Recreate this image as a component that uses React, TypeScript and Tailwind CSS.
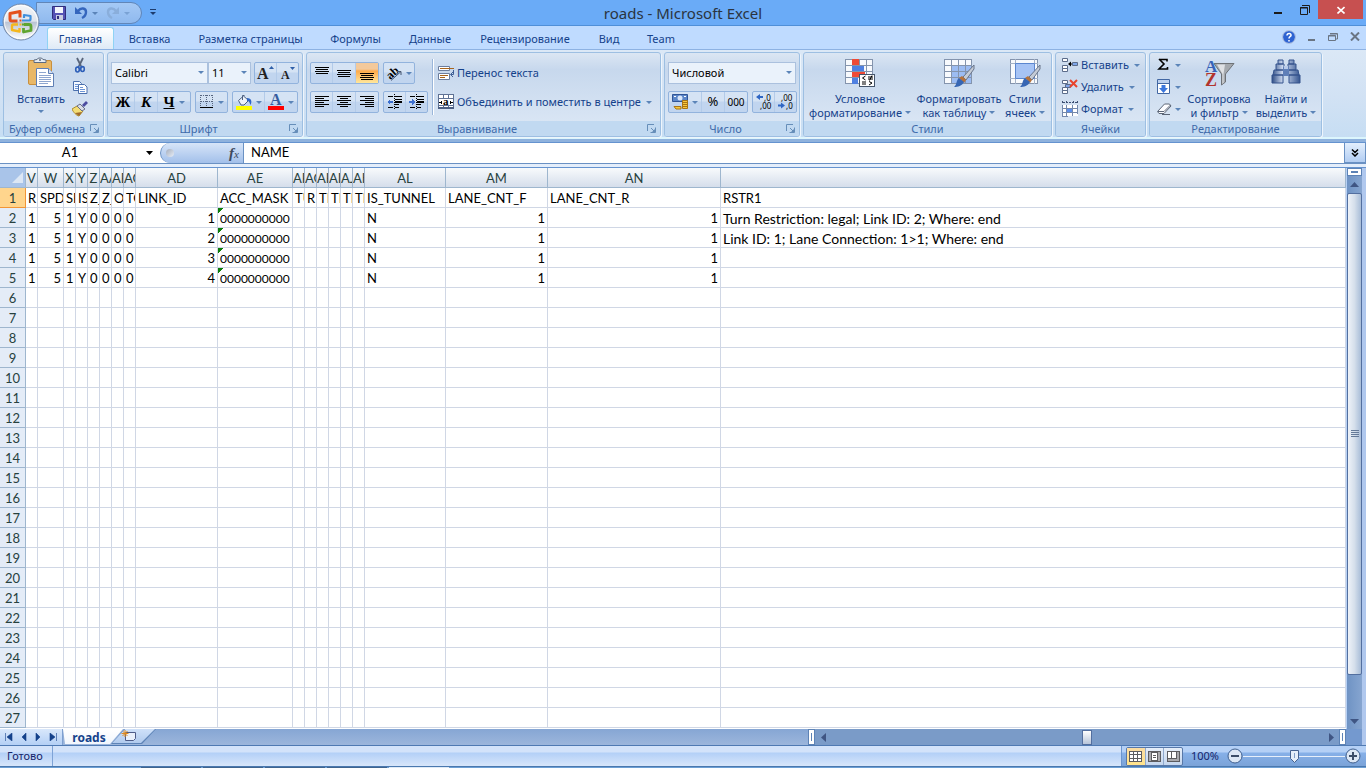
import { useState } from "react";
import type { ReactNode } from "react";
import clsx from "clsx";

const tabs = [
  { name: "Главная", width: "w-[67px]" },
  { name: "Вставка", width: "w-[71px]" },
  { name: "Разметка страницы", width: "w-[131px]" },
  { name: "Формулы", width: "w-[79px]" },
  { name: "Данные", width: "w-[70px]" },
  { name: "Рецензирование", width: "w-[120px]" },
  { name: "Вид", width: "w-[48px]" },
  { name: "Team", width: "w-[56px]" },
];

type Column = { id: string; title: string; width: string; right?: boolean; flag?: boolean };

const columns: Column[] = [
  { id: "V", title: "R", width: "w-[12px]", right: true },
  { id: "W", title: "SPD", width: "w-[26px]", right: true },
  { id: "X", title: "SPE", width: "w-[12px]", right: true },
  { id: "Y", title: "IS_", width: "w-[12px]" },
  { id: "Z", title: "Z_", width: "w-[12px]", right: true },
  { id: "AA", title: "Z_", width: "w-[12px]", right: true },
  { id: "AB", title: "O", width: "w-[12px]", right: true },
  { id: "AC", title: "TO", width: "w-[12px]", right: true },
  { id: "AD", title: "LINK_ID", width: "w-[82px]", right: true },
  { id: "AE", title: "ACC_MASK", width: "w-[75px]", flag: true },
  { id: "AF", title: "TU", width: "w-[12px]" },
  { id: "AG", title: "R", width: "w-[12px]" },
  { id: "AH", title: "TI", width: "w-[12px]" },
  { id: "AI", title: "TI", width: "w-[12px]" },
  { id: "AJ", title: "TI", width: "w-[12px]" },
  { id: "AK", title: "TI", width: "w-[12px]" },
  { id: "AL", title: "IS_TUNNEL", width: "w-[81px]" },
  { id: "AM", title: "LANE_CNT_F", width: "w-[102px]", right: true },
  { id: "AN", title: "LANE_CNT_R", width: "w-[173px]", right: true },
  { id: "", title: "RSTR1", width: "w-auto" },
];

const makeRow = (id: string, restriction: string) => [
  "1", "5", "1", "Y", "0", "0", "0", "0", id, "0000000000",
  "", "", "", "", "", "", "N", "1", "1", restriction,
];

const data = [
  makeRow("1", "Turn Restriction: legal; Link ID: 2; Where: end"),
  makeRow("2", "Link ID: 1; Lane Connection: 1>1; Where: end"),
  makeRow("3", ""),
  makeRow("4", ""),
];

function Arrow({ className }: { className?: string }) {
  return (
    <svg className={clsx("h-[3px] w-[6px] shrink-0", className)} viewBox="0 0 6 3">
      <path d="M0 0h6L3 3z" fill="#5b84b8" />
    </svg>
  );
}

function Group({ title, width, launcher, children }: { title: string; width: string; launcher?: boolean; children: ReactNode }) {
  return (
    <section
      aria-label={title}
      className={clsx(
        "flex h-[85px] shrink-0 flex-col overflow-hidden rounded-[3px] border border-[#9dbfe2] bg-linear-to-b from-[#dbe6f3] from-0% via-[#c7d8ed] via-20% to-[#dee9f6] shadow-[1px_1px_0_#eef5fc]",
        width
      )}
    >
      <div className="flex min-h-0 flex-1">{children}</div>
      <div className="flex h-[15px] items-center bg-[#c1d9f1] text-[#3e6aaa]">
        <span className="flex-1 text-center leading-[15px]">{title}</span>
        {launcher && (
          <button aria-label={title + ": параметры"} className="mr-1 h-[9px] w-[9px]">
            <svg viewBox="0 0 9 9" fill="none" stroke="#668eb9">
              <path d="M.5 7V.5H7M4 4l3 3M8.500 3.500v5h-5" />
              <path d="M8 5v3H5z" fill="#668eb9" stroke="none" />
            </svg>
          </button>
        )}
      </div>
    </section>
  );
}

function Cluster({ children }: { children: ReactNode }) {
  return (
    <div className="flex h-[22px] divide-x divide-[#b3cbe9] rounded-[2px] border border-[#92b3dd] bg-linear-to-b from-[#d5e3f4] from-45% to-[#c1d5ef] to-50%">
      {children}
    </div>
  );
}

function Tool({ label, width, active, drop, children }: { label: string; width: string; active?: boolean; drop?: boolean; children: ReactNode }) {
  return (
    <button
      aria-label={label}
      className={clsx(
        "flex h-5 items-center justify-center gap-1",
        width,
        active && "bg-linear-to-b from-[#f3c99b] from-30% via-[#fcab4a] via-40% to-[#ffe79b]"
      )}
    >
      {children}
      {drop && <Arrow />}
    </button>
  );
}

function Combo({ label, value, width }: { label: string; value: string; width: string }) {
  return (
    <div className={clsx("relative h-[22px]", width)}>
      <select
        aria-label={label}
        className="h-full w-full appearance-none border border-[#abc1de] bg-[#eaf2fb] pl-[3px] text-[11px] text-black outline-none"
      >
        <option>{value}</option>
      </select>
      <Arrow className="pointer-events-none absolute top-[9px] right-1" />
    </div>
  );
}

function Lines({ rows }: { rows: [number, number, number][] }) {
  return (
    <svg className="h-4 w-4" viewBox="0 0 16 16" shapeRendering="crispEdges">
      {rows.map(([x, y, w]) => (
        <rect key={y} x={x} y={y} width={w} height="1" fill="#000" />
      ))}
    </svg>
  );
}

function Indent({ right }: { right?: boolean }) {
  return (
    <svg className="h-4 w-4" viewBox="0 0 16 16" shapeRendering="crispEdges">
      <path d="M1 2h5M8 2h7M1 13h5M8 13h4M8 5h7M8 10h4" stroke="#000" transform="translate(0 .5)" />
      <path d="M8 7h7v2H8z" />
      <path d="M7.500 0v16" stroke="#000" strokeDasharray="1 1" />
      <path d={right ? "M6 8L3 5v2H0v2h3v2z" : "M0 8l3-3v2h3v2H3v2z"} fill="#3c6fd0" />
    </svg>
  );
}

function BigButton({ lines, width, drop = true, children }: { lines: string[]; width: string; drop?: boolean; children: ReactNode }) {
  return (
    <button className={clsx("flex flex-col items-center pt-[5px]", width)}>
      {children}
      <span className="mt-1 leading-[14px] whitespace-nowrap">{lines[0]}</span>
      <span className="flex h-[13px] items-center gap-[3px] leading-[13px] whitespace-nowrap">
        {lines[1]}
        {drop && <Arrow />}
      </span>
    </button>
  );
}

function RowButton({ text, children }: { text: string; children: ReactNode }) {
  return (
    <button className="flex h-[22px] items-center gap-[3px]">
      {children}
      <span>{text}</span>
      <Arrow className="ml-[2px]" />
    </button>
  );
}

function OfficeLogo() {
  return (
    <svg className="h-[38px] w-[38px]" viewBox="0 0 38 38">
      <defs>
        <linearGradient id="orb" x1="0" y1="0" x2="0" y2="1">
          <stop offset="0" stopColor="#f4f6f9" />
          <stop offset=".48" stopColor="#dfe4ec" />
          <stop offset=".5" stopColor="#b9c3d3" />
          <stop offset="1" stopColor="#fff" />
        </linearGradient>
      </defs>
      <circle cx="19" cy="19" r="18" fill="url(#orb)" stroke="#6f86a8" />
      <circle cx="19" cy="19" r="16.500" fill="none" stroke="#fff" opacity=".8" />
      <g fill="none" strokeLinejoin="round">
        <path d="M15.500 18H10a2 2 0 01-2-2v-5.500L18 8.500v6" stroke="#e4501c" strokeWidth="3" />
        <path d="M22 17.500h5a1.500 1.500 0 001.500-1.500v-3L22 12v3" stroke="#3f8fdc" strokeWidth="2.200" />
        <path d="M16 21.500h-4.500A1.500 1.500 0 0010 23v4l7.500 1.500V25" stroke="#f5b71c" strokeWidth="2.400" />
        <path d="M22 21.500h5a2 2 0 012 2v4L21.500 29v-4" stroke="#5fa531" strokeWidth="2.800" />
      </g>
      <path d="M17.500 16.500h2v2h-2z" fill="#e4501c" />
      <path d="M20 16.500h2v2h-2z" fill="#3f8fdc" />
      <path d="M17.500 20.500h2v2h-2z" fill="#f5b71c" />
      <path d="M20 20.500h2v2h-2z" fill="#5fa531" />
    </svg>
  );
}

function PasteIcon() {
  return (
    <svg className="h-[30px] w-[28px]" viewBox="0 0 28 30">
      <rect x="1.500" y="3.500" width="23" height="24" rx="1.500" fill="#e9b867" stroke="#c98f3c" />
      <path d="M7 5.500h12V3l-3-.500C15.500.5 10.500.5 10 2.500L7 3z" fill="#e8edf3" stroke="#5c6b80" />
      <circle cx="13" cy="3" r="1" fill="#5c6b80" />
      <path d="M9.500 11.500h12l5 5v13h-17z" fill="#fff" stroke="#5f7fb4" />
      <path d="M21.500 11.500v5h5" fill="#d5e0f2" stroke="#5f7fb4" />
      <path d="M12 15.500h7M12 18.500h12M12 20.500h12M12 22.500h12M12 24.500h12M12 26.500h9" stroke="#8ea6cf" />
    </svg>
  );
}

function CutIcon() {
  return (
    <svg className="h-4 w-4" viewBox="0 0 16 16" fill="none">
      <path d="M5 1l4 8M11 1L7 9" stroke="#59657a" strokeWidth="1.800" />
      <ellipse cx="5.500" cy="12.500" rx="1.800" ry="2.500" stroke="#2e5fb8" strokeWidth="1.600" />
      <ellipse cx="10.500" cy="12" rx="1.800" ry="2.500" stroke="#2e5fb8" strokeWidth="1.600" />
      <path d="M7 9l-1 2M9 9l1 2" stroke="#2e5fb8" strokeWidth="1.800" />
    </svg>
  );
}

function CopyIcon() {
  return (
    <svg className="h-4 w-4" viewBox="0 0 16 16" stroke="#4a6fad">
      <path d="M1.500 2.500h6l2 2v7h-8z" fill="#f5f9ff" />
      <path d="M6.500 5.500h6l2.500 2.500v6.500H6.500z" fill="#fff" />
      <path d="M3 5.500h3M3 7.500h3M3 9.500h3M8 8.500h3M8 10.500h5M8 12.500h5" stroke="#6d95d6" />
    </svg>
  );
}

function BrushIcon() {
  return (
    <svg className="h-4 w-4" viewBox="0 0 16 16">
      <path d="M0 8l5-3 6 5-4 5c-2 0-6-4-7-7z" fill="#f3dd75" stroke="#ab8a2e" />
      <path d="M3 12l4 3 3-4z" fill="#a06a2c" />
      <path d="M5 5l3-2 5 5-3 2z" fill="#d8dde6" stroke="#6a6f86" />
      <path d="M10 4l4-4 2 2-4 4z" fill="#4c4ca0" />
    </svg>
  );
}

// Table thumbnail shared by the three large style buttons
function StyleIcon({ kind }: { kind: "conditional" | "table" | "cells" }) {
  return (
    <svg className="h-[30px] w-[32px]" viewBox="0 0 32 30">
      <rect x="1.500" y="1.500" width="27" height="24" fill="#f8fafd" stroke="#8494ad" />
      {kind === "table" && <path d="M9 7h19v18H9z" fill="#9cbcf2" />}
      {kind !== "cells" && <path d="M8.500 1v25M15.500 1v25M22.500 1v25M1 7.500h28M1 13.500h28M1 19.500h28" stroke="#8494ad" />}
      {kind === "cells" && (
        <>
          <path d="M6.500 1v25M25.500 1v25M1 5.500h28M1 20.500h28" stroke="#a5b2c6" />
          <path d="M6.500 5.500h19v15h-19z" fill="#a6c3f5" stroke="#5b86cf" />
        </>
      )}
      {kind === "conditional" ? (
        <>
          <path d="M8 1h7v6H8zM8 14h13v5H8z" fill="#ef4a36" />
          <path d="M8 8h12v5H8zM8 20h6v6H8z" fill="#4f80e1" />
          <rect x="15.500" y="16.500" width="15" height="12" fill="#fff" stroke="#44546a" />
          <path d="M21.500 18l-3 2 3 2M18 24h4M18 26h4M24 19h5M24 21h5M28 17.500l-2.500 5M25 23.500l3 1.500-3 2" fill="none" stroke="#000" />
        </>
      ) : (
        <>
          <path d="M31 7L20 19l3 3 8-11z" fill="#c4cbd6" stroke="#68748a" />
          <path d="M19 18l4 4-2 3-5-5z" fill="#b5723c" />
          <path d="M16 20l5 4c-2 4-6 5-10 5 3-2 2-7 5-9z" fill="#3766b4" />
        </>
      )}
    </svg>
  );
}

function SortIcon() {
  return (
    <svg className="h-[30px] w-[32px] overflow-visible" viewBox="0 0 32 30">
      <path d="M11 5.500h20L22.500 16v8l-4 3V16z" fill="#a5a9ae" stroke="#6e7277" />
      <path d="M14 6.500h8L20.500 16v9l-1 1V16z" fill="#dfe1e4" />
      <text x="2" y="14" fontFamily="Liberation Serif, serif" fontWeight="700" fontSize="17" fill="#3763b8">A</text>
      <text x="2" y="28" fontFamily="Liberation Serif, serif" fontWeight="700" fontSize="18" fill="#b2342d">Z</text>
    </svg>
  );
}

function BinocularsIcon() {
  return (
    <svg className="h-[30px] w-[30px]" viewBox="0 0 30 30">
      <defs>
        <linearGradient id="barrel">
          <stop offset="0" stopColor="#2f4d85" />
          <stop offset=".4" stopColor="#d5e1f6" />
          <stop offset="1" stopColor="#34548f" />
        </linearGradient>
      </defs>
      <g fill="url(#barrel)" stroke="#35538c">
        <path d="M7 2h5v4H7zM18 2h5v4h-5zM5 6h8v6H5zM17 6h8v6h-8zM3 12h10v5H2zM17 12h10l1 5H17zM1 17h11v8H1zM18 17h11v8H18z" />
      </g>
      <path d="M12 9h6v9h-6z" fill="#5f7fb8" />
      <path d="M13 8h4v3h-4z" fill="#b9cbea" />
    </svg>
  );
}

function CellsIcon({ kind }: { kind: "insert" | "delete" | "format" }) {
  if (kind === "format") {
    return (
      <svg className="h-4 w-4" viewBox="0 0 16 16" shapeRendering="crispEdges">
        <path d="M1 1.500h14M.5 0v3M15.500 0v3M4.500 0v2M11.500 0v2" stroke="#3c4f72" strokeDasharray="2 1" />
        <path d="M1 4h15v11H1z" fill="#fff" />
        <path d="M5 7h6v4H5z" fill="#5d90ec" />
        <path d="M.5 4v11.500h5M4.500 4v11M10.500 4v11M0 7.500h16M0 11.500h16M15.500 4v9" stroke="#7388ac" fill="none" />
      </svg>
    );
  }
  return (
    <svg className="h-4 w-4" viewBox="0 0 16 16" fill="#fff" stroke="#5b6c8a">
      <path d="M.5 1.500h5v3h-5zM.5 8.500h5v3h-5zM.5 11.500h5v3h-5z" />
      {kind === "insert" ? (
        <>
          <path d="M10.500 5.500h5v3h-5z" fill="#7ea6ea" />
          <path d="M7 7h3" stroke="#000" />
          <path d="M9 4.500L6 7l3 2.500z" fill="#000" stroke="none" />
        </>
      ) : (
        <>
          <path d="M3.500 5.500h5v3h-5z" fill="#7ea6ea" />
          <path d="M8 1l7 7M15 1L8 8" stroke="#e8432c" strokeWidth="2" />
        </>
      )}
    </svg>
  );
}

function Ribbon() {
  return (
    <div className="flex h-[93px] gap-[3px] overflow-hidden border-b border-[#6593cf] bg-linear-to-b from-[#dbe8f6] via-[#d2e2f4] to-[#c5ddf3] px-[3px] pt-[2px] text-[11px] text-[#15428b] shadow-[inset_0_-3px_0_#8fb2dd,inset_0_-5px_0_#dcf6fd]">
      <Group title="Буфер обмена" width="w-[101px]" launcher>
        <div className="ml-[6px]">
          <button className="flex w-[62px] flex-col items-center pt-1">
            <PasteIcon />
            <span className="mt-[5px] leading-[14px]">Вставить</span>
            <Arrow className="mt-1" />
          </button>
        </div>
        <div className="flex flex-col gap-[6px] pt-1">
          <button aria-label="Вырезать"><CutIcon /></button>
          <button aria-label="Копировать"><CopyIcon /></button>
          <button aria-label="Формат по образцу"><BrushIcon /></button>
        </div>
      </Group>

      <Group title="Шрифт" width="w-[196px]" launcher>
        <div className="flex flex-col gap-[7px] pt-[9px] pl-[3px]">
          <div className="flex">
            <Combo label="Шрифт" value="Calibri" width="w-[97px]" />
            <Combo label="Размер" value="11" width="w-[43px]" />
            <div className="ml-[3px]">
              <Cluster>
                <Tool label="Увеличить размер" width="w-[22px]">
                  <svg className="h-5 w-5 overflow-visible" viewBox="0 0 20 20">
                    <text x="1" y="16" fontFamily="Liberation Serif, serif" fontWeight="700" fontSize="16" fill="#222">A</text>
                    <path d="M13 6h5l-2.500-3z" fill="#2f5fa8" />
                  </svg>
                </Tool>
                <Tool label="Уменьшить размер" width="w-[21px]">
                  <svg className="h-5 w-5 overflow-visible" viewBox="0 0 20 20">
                    <text x="3" y="16" fontFamily="Liberation Serif, serif" fontWeight="700" fontSize="12" fill="#222">A</text>
                    <path d="M12 4h5l-2.500 3z" fill="#2f5fa8" />
                  </svg>
                </Tool>
              </Cluster>
            </div>
          </div>
          <div className="flex gap-1 font-['Liberation_Serif',serif] text-[15px] text-black">
            <Cluster>
              <Tool label="Полужирный" width="w-[23px]"><b>Ж</b></Tool>
              <Tool label="Курсив" width="w-[23px]"><b className="italic">К</b></Tool>
              <Tool label="Подчеркнутый" width="w-[32px]" drop><b className="underline">Ч</b></Tool>
            </Cluster>
            <Cluster>
              <Tool label="Границы" width="w-[31px]" drop>
                <svg className="h-[14px] w-[14px]" viewBox="0 0 14 14" shapeRendering="crispEdges">
                  <path d="M1 .5h12M1 6.500h12M.5 0v12M6.500 0v12M12.500 0v12" stroke="#56657f" strokeDasharray="1 1" />
                  <path d="M0 12.500h13" stroke="#000" />
                </svg>
              </Tool>
            </Cluster>
            <Cluster>
              <Tool label="Цвет заливки" width="w-[32px]" drop>
                <svg className="h-4 w-4" viewBox="0 0 16 16">
                  <path d="M2.500 6.500l5-4.500 5 4.500-4.500 4.500H5z" fill="#eef3fb" stroke="#4b5f80" />
                  <path d="M6.500 6V1.500h2" fill="none" stroke="#4b5f80" />
                  <path d="M11 4c5 0 5 4 3.500 7-1-2-1-4-3.500-4z" fill="#2f66c4" />
                  <path d="M0 12h16v4H0z" fill="#ff0" />
                </svg>
              </Tool>
              <Tool label="Цвет текста" width="w-[32px]" drop>
                <svg className="h-4 w-4 overflow-visible" viewBox="0 0 16 16">
                  <text x="2" y="11" fontFamily="Liberation Serif, serif" fontWeight="700" fontSize="16" fill="#355c9e">A</text>
                  <path d="M0 12h16v4H0z" fill="#f00" />
                </svg>
              </Tool>
            </Cluster>
          </div>
        </div>
      </Group>

      <Group title="Выравнивание" width="w-[355px]" launcher>
        <div className="flex flex-col gap-[7px] pt-[9px] pl-[3px]">
          <div className="flex gap-1">
            <Cluster>
              <Tool label="По верхнему краю" width="w-[22px]"><Lines rows={[[1, 2, 14], [2, 4, 12], [1, 6, 14], [2, 8, 12]]} /></Tool>
              <Tool label="Выровнять по середине" width="w-[23px]"><Lines rows={[[1, 5, 14], [2, 7, 12], [1, 9, 14], [2, 11, 12]]} /></Tool>
              <Tool label="По нижнему краю" width="w-[22px]" active><Lines rows={[[1, 8, 14], [2, 10, 12], [1, 12, 14], [2, 14, 12]]} /></Tool>
            </Cluster>
            <Cluster>
              <Tool label="Ориентация" width="w-[30px]" drop>
                <svg className="h-4 w-4 overflow-visible" viewBox="0 0 16 16">
                  <text x="0" y="12" fontFamily="Liberation Serif, serif" fontWeight="700" fontSize="12" transform="rotate(-42 6 8)">ab</text>
                  <path d="M5 15.500l10-9M15 10V6.500h-4" fill="none" stroke="#44546f" />
                </svg>
              </Tool>
            </Cluster>
          </div>
          <div className="flex gap-1">
            <Cluster>
              <Tool label="По левому краю" width="w-[22px]"><Lines rows={[[1, 2, 14], [1, 4, 9], [1, 6, 14], [1, 8, 9], [1, 10, 14], [1, 12, 9]]} /></Tool>
              <Tool label="По центру" width="w-[23px]"><Lines rows={[[1, 2, 14], [4, 4, 8], [1, 6, 14], [4, 8, 8], [1, 10, 14], [4, 12, 8]]} /></Tool>
              <Tool label="По правому краю" width="w-[22px]"><Lines rows={[[1, 2, 14], [6, 4, 9], [1, 6, 14], [6, 8, 9], [1, 10, 14], [6, 12, 9]]} /></Tool>
            </Cluster>
            <Cluster>
              <Tool label="Уменьшить отступ" width="w-[22px]"><Indent /></Tool>
              <Tool label="Увеличить отступ" width="w-[21px]"><Indent right /></Tool>
            </Cluster>
          </div>
        </div>
        <div className="mt-[6px] ml-1 h-[56px] w-[2px] border-l border-[#9ab6da] bg-white" />
        <div className="flex flex-col gap-[7px] pt-[9px] pl-1">
          <button className="flex h-[22px] items-center gap-[3px]">
            <svg className="h-4 w-4" viewBox="0 0 16 16">
              <path d="M.5 1.500h11v4H.5zM.5 8.500h11v6H.5z" fill="#fff" stroke="#6b7d9d" />
              <path d="M2 3.500h14M2 10.500h8M2 12.500h5" stroke="#a8641c" />
              <path d="M15.500 5v4.500H13M15 7l-2.500 2.500L15 12" fill="none" stroke="#3d5f95" />
            </svg>
            <span>Перенос текста</span>
          </button>
          <button className="flex h-[22px] items-center gap-[3px]">
            <svg className="h-4 w-4 overflow-visible" viewBox="0 0 16 16">
              <rect x=".5" y=".5" width="15" height="14" fill="#fff" stroke="#5f7294" />
              <path d="M0 4.500h16M0 11.500h16M5.500 0v4M10.500 0v4M5.500 12v3M10.500 12v3" stroke="#5f7294" />
              <path d="M0 13h16v2H0z" fill="#4c5f82" />
              <text x="5" y="11" fontFamily="Liberation Serif, serif" fontWeight="700" fontSize="11">a</text>
              <path d="M1 8.500h3M12 8.500h3M3.500 7v3M12.500 7v3" stroke="#000" />
            </svg>
            <span className="whitespace-nowrap">Объединить и поместить в центре</span>
            <Arrow className="ml-[2px]" />
          </button>
        </div>
      </Group>

      <Group title="Число" width="w-[136px]" launcher>
        <div className="flex flex-col gap-[7px] pt-[9px] pl-[3px]">
          <Combo label="Числовой формат" value="Числовой" width="w-[128px]" />
          <div className="flex gap-1 text-black">
            <Cluster>
              <Tool label="Финансовый формат" width="w-[33px]" drop>
                <svg className="h-4 w-4" viewBox="0 0 16 16">
                  <path d="M.5.5h15v7H.5z" fill="#5b86c8" stroke="#2f5597" />
                  <circle cx="8" cy="4" r="2.500" fill="#d8e6fa" />
                  <path d="M2 2.500h2M12 2.500h2" stroke="#fff" />
                  <path d="M10.500 6.500h5v8h-5zM2 12.500h7v2.500H4z" fill="#f8c93e" stroke="#a97413" />
                  <path d="M10.500 8.500h5M10.500 10.500h5M10.500 12.500h5" stroke="#a97413" />
                </svg>
              </Tool>
              <Tool label="Процентный формат" width="w-[23px]"><span className="text-[13px]">%</span></Tool>
              <Tool label="Формат с разделителями" width="w-[22px]"><span className="text-[10px]">000</span></Tool>
            </Cluster>
            <Cluster>
              <Tool label="Увеличить разрядность" width="w-[22px]">
                <svg className="h-4 w-4 overflow-visible font-['Noto_Sans',sans-serif]" viewBox="0 0 16 16">
                  <path d="M4 0L0 3l4 3V4h3V2H4z" fill="#2f66c4" />
                  <text x="8" y="7" fontSize="8">,0</text>
                  <text x="4" y="15" fontSize="8">,00</text>
                </svg>
              </Tool>
              <Tool label="Уменьшить разрядность" width="w-[21px]">
                <svg className="h-4 w-4 overflow-visible font-['Noto_Sans',sans-serif]" viewBox="0 0 16 16">
                  <text x="3" y="7" fontSize="8">,00</text>
                  <text x="8" y="15" fontSize="8">,0</text>
                  <path d="M3 8.500l4 3-4 3v-2H0v-2h3z" fill="#2f66c4" />
                </svg>
              </Tool>
            </Cluster>
          </div>
        </div>
      </Group>

      <Group title="Стили" width="w-[249px]">
        <BigButton lines={["Условное", "форматирование"]} width="w-[112px]"><StyleIcon kind="conditional" /></BigButton>
        <BigButton lines={["Форматировать", "как таблицу"]} width="w-[86px]"><StyleIcon kind="table" /></BigButton>
        <BigButton lines={["Стили", "ячеек"]} width="w-[46px]"><StyleIcon kind="cells" /></BigButton>
      </Group>

      <Group title="Ячейки" width="w-[91px]">
        <div className="flex flex-col pt-[1px] pl-[6px]">
          <RowButton text="Вставить"><CellsIcon kind="insert" /></RowButton>
          <RowButton text="Удалить"><CellsIcon kind="delete" /></RowButton>
          <RowButton text="Формат"><CellsIcon kind="format" /></RowButton>
        </div>
      </Group>

      <Group title="Редактирование" width="w-[173px]">
        <div className="flex w-9 flex-col pt-[1px] pl-[6px]">
          <button aria-label="Сумма" className="flex h-[22px] items-center gap-[3px]">
            <svg className="h-4 w-4" viewBox="0 0 16 16">
              <path d="M3 2.500h8v2M3 2l5 5-5 5h8.500v-2" fill="none" stroke="#000" strokeWidth="1.600" />
            </svg>
            <Arrow />
          </button>
          <button aria-label="Заполнить" className="flex h-[22px] items-center gap-[3px]">
            <svg className="h-4 w-4" viewBox="0 0 16 16">
              <path d="M1.500.5h12v14h-12z" fill="#fff" stroke="#4267a3" />
              <path d="M2 1h11v3H2z" fill="#bcd0ee" />
              <path d="M1 4.500h13" stroke="#4267a3" />
              <path d="M5.500 6h4v3H12l-4.500 5L3 9h2.500z" fill="#3b76dc" />
            </svg>
            <Arrow />
          </button>
          <button aria-label="Очистить" className="flex h-[22px] items-center gap-[3px]">
            <svg className="h-4 w-4" viewBox="0 0 16 16">
              <path d="M1.500 10.500l7-7.500h5l1.500 2-7 7.500h-5z" fill="#fdfdff" stroke="#5c6677" />
              <path d="M2 10.500h6L14.500 4M6 13.500h8" fill="none" stroke="#5c6677" />
            </svg>
            <Arrow />
          </button>
        </div>
        <BigButton lines={["Сортировка", "и фильтр"]} width="w-[66px]"><SortIcon /></BigButton>
        <BigButton lines={["Найти и", "выделить"]} width="w-[68px]"><BinocularsIcon /></BigButton>
      </Group>
    </div>
  );
}

function TitleBar() {
  return (
    <header className="relative flex h-[26px] items-start border-b border-[#4f8fd8] bg-[#6aabf7]">
      <div className="absolute top-[3px] left-[2px] z-10">
        <button aria-label="Кнопка Office" className="rounded-full"><OfficeLogo /></button>
      </div>
      <div className="flex flex-1 items-center">
        <div className="mt-[2px] ml-9 flex h-[22px] w-[106px] items-center rounded-r-full border border-[#6186b8] bg-linear-to-b from-[#a5c9f5] to-[#8fb9ee] pl-[15px]">
          <button aria-label="Сохранить">
            <svg className="h-[14px] w-[14px]" viewBox="0 0 14 14">
              <path d="M.5.5h13v13h-12l-1-1z" fill="#5552b4" stroke="#302e7c" />
              <path d="M3 1h8v6H3z" fill="#f3f5fb" />
              <path d="M4 9h7v5H4z" fill="#c9cde0" />
              <path d="M5 10h2v3H5z" fill="#302e7c" />
            </svg>
          </button>
          <button aria-label="Отменить" className="ml-2 flex items-center gap-1">
            <svg className="h-[14px] w-[14px]" viewBox="0 0 14 14" fill="none">
              <path d="M4 5c3-4 8-3 8 1 0 3-2 5-4 6" stroke="#3566bd" strokeWidth="2.400" />
              <path d="M1 1v7h7z" fill="#3566bd" />
            </svg>
            <Arrow />
          </button>
          <button aria-label="Вернуть" className="ml-2 flex items-center gap-1">
            <svg className="h-[14px] w-[14px]" viewBox="0 0 14 14" fill="none">
              <path d="M10 5C7 1 2 2 2 6c0 3 2 5 4 6" stroke="#8aaedb" strokeWidth="2.400" />
              <path d="M13 1v7H6z" fill="#8aaedb" />
            </svg>
            <Arrow className="opacity-50" />
          </button>
        </div>
        <button aria-label="Настройка панели быстрого доступа" className="ml-2">
          <svg className="h-[6px] w-[6px]" viewBox="0 0 6 6">
            <path d="M0 .5h6" stroke="#1d3c6e" />
            <path d="M0 3h6L3 6z" fill="#1d3c6e" />
          </svg>
        </button>
      </div>
      <h1 className="text-[15px] leading-[27px] text-[#2b3440]">roads - Microsoft Excel</h1>
      <div className="flex flex-1 justify-end text-[#1b1b1b]">
        <button aria-label="Свернуть" className="flex h-[19px] w-[26px] items-center justify-center">
          <svg className="h-[10px] w-[10px]" viewBox="0 0 10 10"><path d="M1 7h8v2H1z" fill="currentColor" /></svg>
        </button>
        <button aria-label="Развернуть" className="flex h-[19px] w-[27px] items-center justify-center">
          <svg className="h-[10px] w-[10px]" viewBox="0 0 10 10" fill="none" stroke="currentColor">
            <path d="M.5 2.500h7v7h-7zM0 3h8M2 .5h7.500V8" />
          </svg>
        </button>
        <button aria-label="Закрыть" className="mr-[3px] flex h-[19px] w-[45px] items-center justify-center bg-[#c75050]">
          <svg className="h-2 w-2" viewBox="0 0 8 8"><path d="M.5 1l7 6.500M7.500 1l-7 6.500" stroke="#fff" strokeWidth="1.600" /></svg>
        </button>
      </div>
    </header>
  );
}

function TabRow() {
  const [active, setActive] = useState("Главная");

  return (
    <nav className="flex h-6 items-end border-b border-[#8db2e3] bg-[#bfdbff] pl-[47px] text-[11px] text-[#15428b]">
      {tabs.map((tab) => (
        <button
          key={tab.name}
          onClick={() => setActive(tab.name)}
          className={clsx(
            "h-[22px] leading-[21px] whitespace-nowrap",
            tab.width,
            active === tab.name && "rounded-t-[3px] border border-b-0 border-[#8fd3f5] bg-linear-to-b from-white to-[#dfeaf6]"
          )}
        >
          {tab.name}
        </button>
      ))}
      <div className="flex h-full flex-1 items-center justify-end gap-[10px] pr-[6px] pb-[2px]">
        <button aria-label="Справка">
          <svg className="h-[14px] w-[14px]" viewBox="0 0 14 14">
            <circle cx="7" cy="7" r="6.500" fill="#2e63d2" stroke="#fff" />
            <circle cx="7" cy="7" r="6.500" fill="none" stroke="#6c8fc9" strokeWidth=".6" />
            <path d="M5 5.500c0-3 4.500-2.500 4 0C8.800 6.500 7 6.500 7 8.500M7 10v1.500" fill="none" stroke="#fff" strokeWidth="1.500" />
          </svg>
        </button>
        <button aria-label="Свернуть окно книги">
          <svg className="h-2 w-3" viewBox="0 0 12 8"><path d="M2 6h7v2H2z" fill="#6a7583" /></svg>
        </button>
        <button aria-label="Восстановить окно книги">
          <svg className="h-[10px] w-3" viewBox="0 0 12 10" fill="none" stroke="#6a7583">
            <path d="M.5 3.500h7v5h-7zM.5 4h7M2 1.500h7.500V7H8M2 2h7" />
          </svg>
        </button>
        <button aria-label="Закрыть книгу">
          <svg className="h-[9px] w-[10px]" viewBox="0 0 10 9"><path d="M1 .5l8 8M9 .5l-8 8" stroke="#6a7583" strokeWidth="2" /></svg>
        </button>
      </div>
    </nav>
  );
}

function FormulaBar() {
  return (
    <div className="flex h-[25px] flex-col border-b border-[#6593cf] bg-[#e4eefb]">
      <div className="flex h-[21px] border-b border-[#6a91c3] bg-white font-[Lato,sans-serif] text-[13px] text-black">
        <input aria-label="Имя" defaultValue="A1" className="w-[140px] text-center outline-none" />
        <button aria-label="Список имен" className="flex w-5 items-center pl-[6px]">
          <svg className="h-1 w-[7px]" viewBox="0 0 7 4"><path d="M0 0h7L3.500 4z" /></svg>
        </button>
        <div className="flex w-[84px] items-center rounded-l-full border-r border-l border-[#6a91c3] bg-linear-to-b from-[#d7e5f8] to-[#a3c0ea] pr-1 pl-[5px]">
          <span className="h-2 w-2 rounded-full bg-linear-to-br from-[#a5aebd] to-[#e8eef7]" />
          <button aria-label="Вставить функцию" className="ml-auto font-['Liberation_Serif',serif] text-[15px] leading-none text-[#3e4a5c] italic">
            <b>f</b><span className="text-[11px]">x</span>
          </button>
        </div>
        <input aria-label="Строка формул" defaultValue="NAME" className="min-w-0 flex-1 pl-[7px] outline-none" />
        <button aria-label="Развернуть строку формул" className="flex w-[22px] items-center justify-center border border-t-0 border-[#6a91c3] bg-linear-to-b from-[#e3effd] to-[#b2cdf2]">
          <svg className="h-2 w-2" viewBox="0 0 8 8" fill="none" stroke="#000" strokeWidth="1.500"><path d="M1 .5l3 3 3-3M1 4l3 3 3-3" /></svg>
        </button>
      </div>
    </div>
  );
}

function Sheet() {
  return (
    <div className="min-w-0 flex-1 overflow-hidden bg-white">
      <table className="w-full table-fixed border-separate border-spacing-0 font-[Lato,sans-serif] text-[13px] leading-[17px] text-black">
        <thead>
          <tr className="h-5 text-[#27413e]">
            <th className="w-[26px] border-r border-b border-[#9eb6ce] bg-[#a9c4e9] p-0">
              <svg className="ml-auto h-[13px] w-[13px]" viewBox="0 0 13 13"><path d="M11 1v11H0z" fill="#dce7f5" /></svg>
            </th>
            {columns.map((col) => (
              <th
                key={col.id}
                scope="col"
                className={clsx("overflow-hidden border-r border-b border-[#9eb6ce] bg-linear-to-b from-[#f8fafc] to-[#d5deeb] px-0 pt-[2px] pb-0 font-normal whitespace-nowrap", col.width)}
              >
                {col.id}
              </th>
            ))}
          </tr>
        </thead>
        <tbody>
          {Array.from({ length: 27 }, (_, r) => (
            <tr key={r} className="h-5">
              <th
                scope="row"
                className={clsx(
                  "border-r border-b px-0 pt-[2px] pb-0 text-center font-normal text-[#27413e]",
                  r === 0 ? "border-[#f29536] bg-[#ffd58d]" : "border-[#9eb6ce] bg-[#e4ecf7]"
                )}
              >
                {r + 1}
              </th>
              {columns.map((col, c) => {
                const value = r === 0 ? col.title : data[r - 1]?.[c];
                const filled = r > 0 && r < 5;
                return (
                  <td
                    key={col.id}
                    className={clsx(
                      "overflow-hidden border-r border-b border-[#d0d7e5] px-[2px] pt-[2px] pb-0 whitespace-nowrap",
                      r > 0 && col.right && "text-right",
                      filled && col.flag && "bg-[linear-gradient(135deg,#0a7d0a_4px,transparent_4px)] text-[12px]",
                      filled && !col.id && "text-[14px]"
                    )}
                  >
                    {value}
                  </td>
                );
              })}
            </tr>
          ))}
        </tbody>
      </table>
    </div>
  );
}

function VerticalScroll() {
  return (
    <div className="flex w-5 shrink-0 flex-col items-start border-r-4 border-l border-r-[#b0c8ee] border-l-[#b7d1f5] bg-linear-to-r from-[#6f93c4] to-[#86a5d0]">
      <div className="flex h-[8px] w-[15px] items-center justify-center border border-[#5d83b6] bg-white">
        <span className="h-[2px] w-[7px] bg-[#5d83b6]" />
      </div>
      <button aria-label="Вверх" className="flex h-[17px] w-[15px] items-center justify-center">
        <svg className="h-[5px] w-[9px]" viewBox="0 0 9 5"><path d="M0 5h9L4.500 0z" fill="#3f5583" /></svg>
      </button>
      <div className="flex h-[86%] w-[15px] items-center justify-center rounded-[2px] border border-[#536f9f] bg-linear-to-r from-[#eef2f8] via-[#d5dfeb] to-[#a9bdd8]">
        <svg className="h-2 w-2" viewBox="0 0 8 8" shapeRendering="crispEdges"><path d="M0 .5h8M0 2.500h8M0 4.500h8M0 6.500h8" stroke="#657a98" /></svg>
      </div>
      <button aria-label="Вниз" className="mt-auto flex h-4 w-[15px] items-center justify-center">
        <svg className="h-[5px] w-[9px]" viewBox="0 0 9 5"><path d="M0 0h9L4.500 5z" fill="#3f5583" /></svg>
      </button>
    </div>
  );
}

function SheetTabs() {
  const nav = [
    { label: "Первый лист", d: "M.5 0v8M7 0v8L2 4z" },
    { label: "Предыдущий лист", d: "M6 0v8L2 4z" },
    { label: "Следующий лист", d: "M2 0v8l4-4z" },
    { label: "Последний лист", d: "M7.500 0v8M1 0v8l5-4z" },
  ];

  return (
    <div className="flex h-[17px] shrink-0 border-b border-[#4f7ab3] bg-linear-to-b from-[#86a6d4] to-[#9cb6dc]">
      <div className="flex w-[63px] items-center justify-around border-r border-[#7d9fd0] bg-linear-to-b from-[#d9e8fb] to-[#b4d0f5] px-[2px]">
        {nav.map((item) => (
          <button key={item.label} aria-label={item.label}>
            <svg className="h-2 w-2" viewBox="0 0 8 8"><path d={item.d} fill="#15428b" stroke="#15428b" strokeWidth=".6" /></svg>
          </button>
        ))}
      </div>
      <button className="h-[15px] w-[60px] bg-linear-to-b from-white to-[#f1f6fd] pr-2 text-[12px] leading-[17px] font-bold text-[#15428b] [clip-path:polygon(0_0,100%_0,calc(100%-13px)_100%,2px_100%)]">
        roads
      </button>
      <div className="-ml-3 h-[15px] w-[45px] bg-[#5d83b6] [clip-path:polygon(14px_0,100%_0,calc(100%-14px)_100%,0_100%)]">
        <button aria-label="Вставить лист" className="flex h-[14px] w-11 items-center justify-center bg-linear-to-b from-[#cfe1f9] to-[#b1cbee] pr-2 [clip-path:polygon(14px_0,100%_0,calc(100%-14px)_100%,1px_100%)]">
          <svg className="h-3 w-4" viewBox="0 0 16 12">
            <path d="M4.500 2.500h10v6l-2 2h-8z" fill="#e9f0fb" stroke="#4e5c88" />
            <path d="M4 0v7M.5 3.500h7M1.500 1l5 5M6.500 1l-5 5" stroke="#e28a1a" />
          </svg>
        </button>
      </div>
      <div className="flex flex-1 justify-end">
        <div className="flex w-[538px] bg-[#7a9bc8]">
          <span className="flex w-[7px] items-center justify-center border border-[#5d83b6] bg-white"><i className="h-2 w-px bg-[#5d83b6]" /></span>
          <button aria-label="Влево" className="flex w-4 items-center justify-center">
            <svg className="h-[9px] w-[5px]" viewBox="0 0 5 9"><path d="M5 0v9L0 4.500z" fill="#3f5583" /></svg>
          </button>
          <div className="flex flex-1 items-center justify-center pl-5">
            <span className="h-[15px] w-[10px] border border-[#536f9f] bg-linear-to-b from-white to-[#b7c5da]" />
          </div>
          <button aria-label="Вправо" className="flex w-4 items-center justify-center">
            <svg className="h-[9px] w-[5px]" viewBox="0 0 5 9"><path d="M0 0v9l5-4.500z" fill="#3f5583" /></svg>
          </button>
          <span className="flex w-[7px] items-center justify-center border border-[#5d83b6] bg-white"><i className="h-2 w-px bg-[#5d83b6]" /></span>
        </div>
        <div className="w-[20px] border-r-4 border-[#b0c8ee] bg-[#7499cf]" />
      </div>
    </div>
  );
}

function StatusBar() {
  return (
    <footer className="shrink-0 text-[11px] text-[#15256b]">
      <div className="flex h-5 bg-linear-to-b from-[#d3e3fa] from-30% via-[#b3d0f7] via-35% to-[#d8e6fa]">
        <span className="w-[53px] border-r border-[#7ea3d6] pl-[7px] leading-5">Готово</span>
        <div className="flex-1" />
        <div className="flex w-[245px] items-center border-l border-[#6b94cd] bg-linear-to-b from-[#b4d0f6] from-30% via-[#86b0e8] via-35% to-[#7ba3d8] pl-1">
          <div className="flex h-[19px] w-[57px] divide-x divide-[#8fa9cd] rounded-[2px] border border-[#5878a8] bg-linear-to-b from-[#e6eef9] to-[#c4d6ee]">
            <button aria-label="Обычный" className="flex flex-1 items-center justify-center bg-linear-to-b from-[#fbdca3] to-[#ffe48c]">
              <svg className="h-[11px] w-[13px]" viewBox="0 0 13 11" shapeRendering="crispEdges"><path d="M.5.5h12v10H.5zM4.500 0v11M8.500 0v11M0 3.500h13M0 7.500h13" fill="#fff" stroke="#5c5c60" /></svg>
            </button>
            <button aria-label="Разметка страницы" className="flex flex-1 items-center justify-center">
              <svg className="h-[11px] w-[13px]" viewBox="0 0 13 11" shapeRendering="crispEdges"><path d="M.5.5h12v10H.5z" fill="#a9a9ad" stroke="#5c5c60" /><path d="M3.500 1.500h6v8h-6z" fill="#fff" stroke="#5c5c60" /><path d="M5 4.500h3M5 6.500h3" stroke="#5c5c60" /></svg>
            </button>
            <button aria-label="Страничный режим" className="flex flex-1 items-center justify-center">
              <svg className="h-[11px] w-[13px]" viewBox="0 0 13 11" shapeRendering="crispEdges"><path d="M.5.5h12v10H.5z" fill="#a9a9ad" stroke="#5c5c60" /><path d="M1 1h3v6H1zM5 1h4v6H5z" fill="#fff" /><path d="M4.500 0v7M9.500 0v7H1" fill="none" stroke="#5c5c60" /></svg>
            </button>
          </div>
          <span className="w-[44px] text-center">100%</span>
          <button aria-label="Уменьшить">
            <svg className="h-4 w-4" viewBox="0 0 16 16"><circle cx="8" cy="8" r="7" fill="#dce7f5" stroke="#3f5f8f" /><path d="M4 7h8v2H4z" fill="#3c4d68" /></svg>
          </button>
          <div className="flex flex-1 items-center justify-center bg-[linear-gradient(#e6effb,#e6effb)] bg-[length:100%_1px] bg-center bg-no-repeat">
            <svg className="h-[13px] w-[9px]" viewBox="0 0 9 13"><path d="M.5.5h8v8l-4 4-4-4z" fill="#e4edf8" stroke="#44618f" /><path d="M4.500 3v5" stroke="#7f9cc6" /></svg>
          </div>
          <button aria-label="Увеличить" className="mr-[5px]">
            <svg className="h-4 w-4" viewBox="0 0 16 16"><circle cx="8" cy="8" r="7" fill="#dce7f5" stroke="#3f5f8f" /><path d="M4 7h8v2H4zM7 4h2v8H7z" fill="#3c4d68" /></svg>
          </button>
        </div>
      </div>
      {/* top edge of the taskbar with its window buttons */}
      <div className="flex h-[2px] gap-[2px] border-t border-[#4a78ae] bg-[#6d9fd4] pl-[141px]">
        <span className="w-[60px] bg-[#3f648f]" />
        <span className="w-[60px] bg-[#3f648f]" />
        <span className="w-[60px] bg-[#3f648f]" />
        <span className="w-[60px] bg-[#3f648f]" />
        <span className="w-[60px] bg-[#dfeaf6]" />
      </div>
    </footer>
  );
}

export default function App() {
  return (
    <div className="flex h-screen w-full flex-col overflow-hidden bg-[#bfdbff] font-['Noto_Sans',sans-serif]">
      <TitleBar />
      <TabRow />
      <Ribbon />
      <FormulaBar />
      <div className="flex min-h-0 flex-1">
        <Sheet />
        <VerticalScroll />
      </div>
      <SheetTabs />
      <StatusBar />
    </div>
  );
}
